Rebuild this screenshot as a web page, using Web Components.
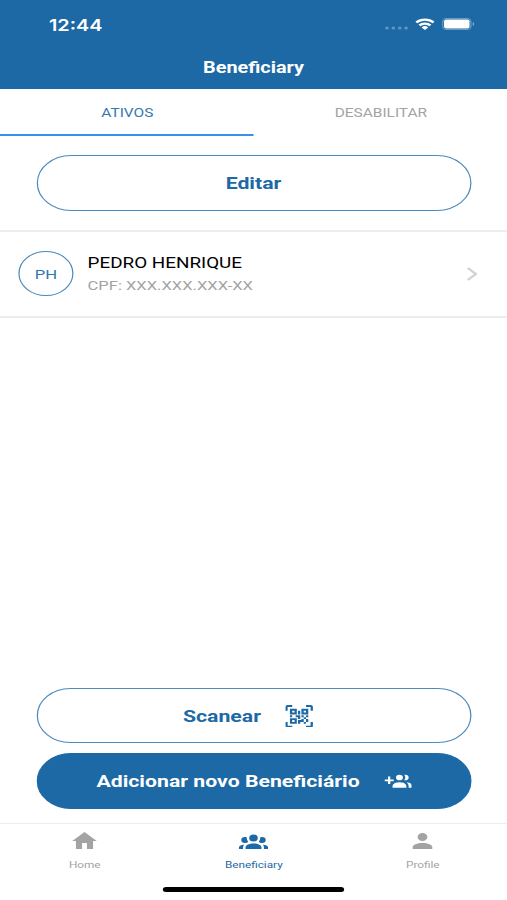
<!DOCTYPE html>
<html lang="pt-BR">
<head>
<meta charset="utf-8">
<title>Beneficiary</title>
<style>
  body { margin: 0; overflow: hidden; background: #fff; }
</style>
</head>
<body>

<phone-screen>
  <status-bar slot="top" time="12:44"></status-bar>
  <nav-header slot="top">Beneficiary</nav-header>

  <tab-bar slot="top">
    <tab-item active>ATIVOS</tab-item>
    <tab-item>DESABILITAR</tab-item>
  </tab-bar>

  <pill-button class="edit">Editar</pill-button>
  <person-row initials="PH">
    PEDRO HENRIQUE
    <span slot="detail">CPF: XXX.XXX.XXX-XX</span>
  </person-row>

  <pill-button slot="actions" icon="qrcode">Scanear</pill-button>
  <pill-button slot="actions" icon="add" filled>Adicionar novo Beneficiário</pill-button>

  <bottom-nav slot="bottom">
    <nav-item icon="home">Home</nav-item>
    <nav-item icon="group" active>Beneficiary</nav-item>
    <nav-item icon="account">Profile</nav-item>
  </bottom-nav>
</phone-screen>

<script>
const ICONS = {
  home: "M10,20V14H14V20H19V12H22L12,3L2,12H5V20H10Z",
  account: "M12,4A4,4 0 0,1 16,8A4,4 0 0,1 12,12A4,4 0 0,1 8,8A4,4 0 0,1 12,4M12,14C16.42,14 20,15.79 20,18V20H4V18C4,15.79 7.58,14 12,14Z",
  group: "M12,5.5A3.5,3.5 0 0,1 15.5,9A3.5,3.5 0 0,1 12,12.5A3.5,3.5 0 0,1 8.5,9A3.5,3.5 0 0,1 12,5.5M5,8C5.56,8 6.08,8.15 6.53,8.42C6.38,9.85 6.8,11.27 7.66,12.38C7.16,13.34 6.16,14 5,14A3,3 0 0,1 2,11A3,3 0 0,1 5,8M19,8A3,3 0 0,1 22,11A3,3 0 0,1 19,14C17.84,14 16.84,13.34 16.34,12.38C17.2,11.27 17.62,9.85 17.47,8.42C17.92,8.15 18.44,8 19,8M5.5,18.25C5.5,16.18 8.41,14.5 12,14.5C15.59,14.5 18.5,16.18 18.5,18.25V20H5.5V18.25M0,20V18.5C0,17.11 1.89,15.94 4.45,15.6C3.86,16.28 3.5,17.22 3.5,18.25V20H0M24,20H20.5V18.25C20.5,17.22 20.14,16.28 19.55,15.6C22.11,15.94 24,17.11 24,18.5V20Z",
  add: "M19 17V19H7V17S7 13 13 13 19 17 19 17M16 8A3 3 0 1 0 13 11A3 3 0 0 0 16 8M19.2 13.06A5.6 5.6 0 0 1 21 17V19H24V17S24 13.55 19.2 13.06M18 5A2.91 2.91 0 0 0 17.11 5.14A5 5 0 0 1 17.11 10.86A2.91 2.91 0 0 0 18 11A3 3 0 0 0 18 5M8 10H5V7H3V10H0V12H3V15H5V12H8Z",
  qrcode: "M4,4H10V10H4V4M20,4V10H14V4H20M14,15H16V13H14V11H16V13H18V11H20V13H18V15H20V18H18V20H16V18H13V20H11V16H14V15M16,15V18H18V15H16M4,20V14H10V20H4M6,6V8H8V6H6M16,6V8H18V6H16M6,16V18H8V16H6M4,11H6V13H4V11M9,11H13V15H11V13H9V11M11,6H13V10H11V6M2,2V6H0V2A2,2 0 0,1 2,0H6V2H2M22,0A2,2 0 0,1 24,2V6H22V2H18V0H22M2,18V22H6V24H2A2,2 0 0,1 0,22V18H2M22,22V18H24V22A2,2 0 0,1 22,24H18V22H22Z"
};

// common base: puts the element's template() in an open shadow root
class BaseElement extends HTMLElement {
  connectedCallback() {
    if (this.shadowRoot) { return; }
    let template = document.createElement("template");
    template.innerHTML = this.template();
    this.attachShadow({ mode: "open" }).appendChild(template.content.cloneNode(true));
  }

  icon(name) {
    return ICONS[name] ? `<svg viewBox="0 0 24 24"><path fill="currentColor" d="${ICONS[name]}"/></svg>` : "";
  }
}

class PhoneScreen extends BaseElement {
  template() {
    return `
      <style>
        :host {
          --primary: #1c69a5;
          --line: #ededed;
          --muted: #a3a3a3;
          display: flex; flex-direction: column;
          width: 414px; height: 900px;
          transform: scaleX(1.22464); transform-origin: 0 0;
          font-family: Roboto, "Liberation Sans", sans-serif;
          background: #fff; color: #000;
        }
        main { flex: 1; display: flex; flex-direction: column; padding-top: 19px; }
        ::slotted(.edit) { margin: 0 29.5px 19px; }
        .actions { display: flex; flex-direction: column; gap: 10px; padding: 0 29.5px 14px; }
      </style>
      <slot name="top"></slot>
      <main><slot></slot></main>
      <div class="actions"><slot name="actions"></slot></div>
      <slot name="bottom"></slot>
    `;
  }
}

class StatusBar extends BaseElement {
  template() {
    return `
      <style>
        :host {
          display: flex; align-items: center; justify-content: space-between;
          box-sizing: border-box; height: 46px; padding: 3px 26.5px 0 40px;
          background: var(--primary); color: #fff;
        }
        .time { font: 600 16.2px/20px Inter, Roboto, sans-serif; }
        .right { display: flex; align-items: center; margin-top: -1px; }
        svg { display: block; }
        .wifi { margin: 0 6px 0 5px; }
      </style>
      <span class="time">${this.getAttribute("time")}</span>
      <span class="right">
        <svg width="20" height="12" viewBox="0 0 20 12" fill="#fff" fill-opacity=".3">
          <circle cx="2" cy="10" r="1.5"/><circle cx="7.2" cy="10" r="1.5"/>
          <circle cx="12.4" cy="10" r="1.5"/><circle cx="17.6" cy="10" r="1.5"/>
        </svg>
        <svg class="wifi" width="16" height="12" viewBox="0 0 16 12" fill="none" stroke="#fff" stroke-width="2.2">
          <path d="M.9 4.5a10.2 10.2 0 0 1 14.2 0M3.5 7.4a6.4 6.4 0 0 1 9 0"/>
          <path fill="#fff" stroke="none" d="M8 12 5.3 9.4a3.9 3.9 0 0 1 5.4 0z"/>
        </svg>
        <svg width="27" height="12" viewBox="0 0 27 12">
          <rect x=".5" y=".5" width="23" height="11" rx="3" fill="none" stroke="#fff" stroke-opacity=".35"/>
          <rect x="1.6" y="1.5" width="20.8" height="9" rx="1.8" fill="#fff"/>
          <path d="M25 4v4a2.2 2.2 0 0 0 0-4" fill="#fff" fill-opacity=".4"/>
        </svg>
      </span>
    `;
  }
}

class NavHeader extends BaseElement {
  template() {
    return `
      <style>
        :host {
          display: flex; align-items: center; justify-content: center;
          height: 43px; background: var(--primary); color: #fff;
          font-size: 16.2px; font-weight: 700;
        }
      </style>
      <slot></slot>
    `;
  }
}

class TabBar extends BaseElement {
  template() {
    return `
      <style>:host { display: flex; height: 47px; }</style>
      <slot></slot>
    `;
  }
}

class TabItem extends BaseElement {
  template() {
    return `
      <style>
        :host {
          flex: 1; display: flex; align-items: center; justify-content: center;
          box-sizing: border-box; border-bottom: 2px solid transparent; padding: 2px 0 0 1px;
          color: var(--muted); font-size: 12.6px;
        }
        :host([active]) { color: #3477ae; border-color: #3a8fe6; }
      </style>
      <slot></slot>
    `;
  }
}

class PillButton extends BaseElement {
  template() {
    return `
      <style>
        :host {
          display: flex; align-items: center; justify-content: center; gap: 20px;
          box-sizing: border-box; height: 55.5px; flex: none;
          border: 1px solid #4c8abd; border-radius: 28px;
          color: var(--primary); font-size: 17.35px; font-weight: 700;
        }
        :host([icon=qrcode]) { padding: 1px 9px 0 0; }
        :host([icon=add]) { padding-left: 1px; }
        :host([filled]) { background: var(--primary); border-color: var(--primary); color: #fff; }
        svg { width: 22.5px; height: 22.5px; }
      </style>
      <slot></slot>${this.icon(this.getAttribute("icon"))}
    `;
  }
}

class PersonRow extends BaseElement {
  template() {
    return `
      <style>
        :host {
          display: flex; align-items: center; box-sizing: border-box;
          height: 88.5px; padding: 0 24px 0 15px;
          border: solid var(--line); border-width: 2px 0;
        }
        .avatar {
          display: flex; align-items: center; justify-content: center;
          box-sizing: border-box; width: 45px; height: 45px;
          border: 1px solid #4c8abd; border-radius: 50%;
          color: #3477ae; font-size: 13.6px;
        }
        .text { flex: 1; margin-left: 11.5px; font-size: 15.4px; line-height: 22px; }
        .detail { color: var(--muted); font-size: 13.5px; }
      </style>
      <div class="avatar">${this.getAttribute("initials")}</div>
      <div class="text">
        <div><slot></slot></div>
        <div class="detail"><slot name="detail"></slot></div>
      </div>
      <svg width="9" height="14" viewBox="0 0 9 14" fill="none" stroke="#d2d2d2" stroke-width="2.2">
        <path d="M1 1l6.5 6L1 13"/>
      </svg>
    `;
  }
}

class BottomNav extends BaseElement {
  template() {
    return `
      <style>
        :host { display: block; height: 77.5px; box-sizing: border-box; border-top: 1px solid var(--line); }
        nav { display: flex; height: 63.5px; }
        .bar { width: 147.5px; height: 5px; margin: 0 auto; border-radius: 3px; background: #000; }
      </style>
      <nav><slot></slot></nav>
      <div class="bar"></div>
    `;
  }
}

class NavItem extends BaseElement {
  template() {
    return `
      <style>
        :host {
          flex: 1; display: flex; flex-direction: column; align-items: center;
          padding: 5.5px 0 0 .5px; color: var(--muted); font-size: 9.6px; line-height: 14px;
        }
        :host([active]) { color: var(--primary); }
        svg { width: 24px; height: 24px; margin-bottom: 4.5px; }
      </style>
      ${this.icon(this.getAttribute("icon"))}
      <slot></slot>
    `;
  }
}

customElements.define("phone-screen", PhoneScreen);
customElements.define("status-bar", StatusBar);
customElements.define("nav-header", NavHeader);
customElements.define("tab-bar", TabBar);
customElements.define("tab-item", TabItem);
customElements.define("pill-button", PillButton);
customElements.define("person-row", PersonRow);
customElements.define("bottom-nav", BottomNav);
customElements.define("nav-item", NavItem);
</script>
</body>
</html>
